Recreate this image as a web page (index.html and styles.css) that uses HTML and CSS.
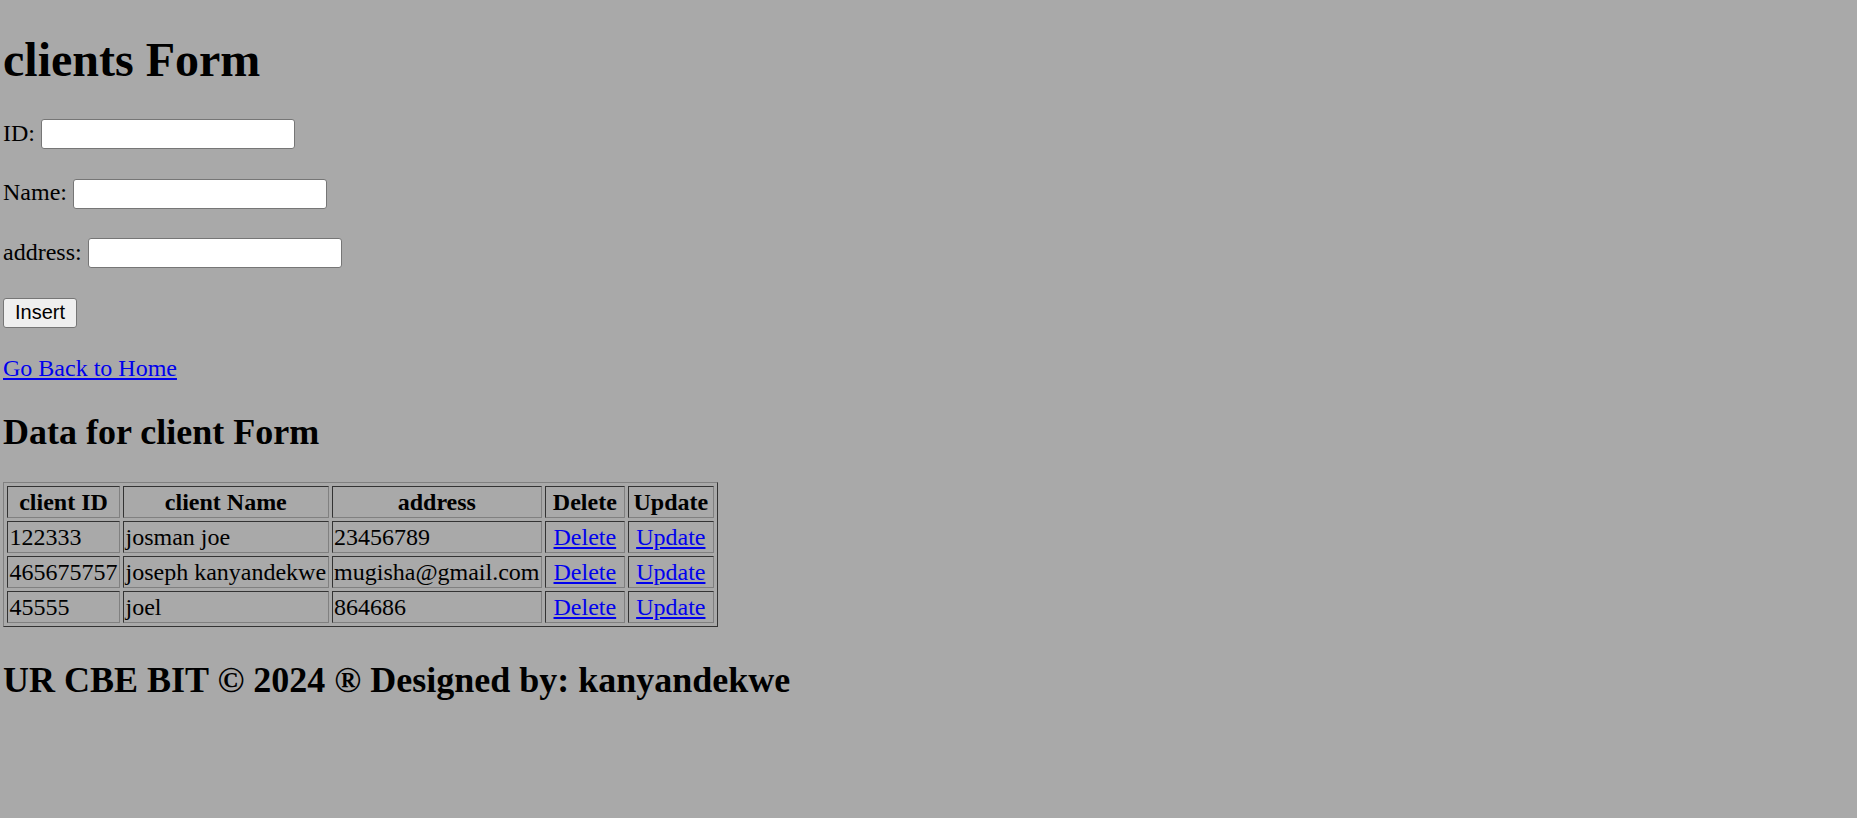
FILE: index.html
```html
<!DOCTYPE html>
<html>
<head>
<meta charset="utf-8">
<title>clients Form</title>
<link rel="stylesheet" href="styles.css">
</head>
<body>
<h1 class="title">clients Form</h1>
<form class="form">
  <p class="row"><label>ID: <input type="text" class="field"></label></p>
  <p class="row"><label>Name: <input type="text" class="field"></label></p>
  <p class="row"><label>address: <input type="text" class="field"></label></p>
  <p class="row last"><button type="button" class="btn">Insert</button></p>
</form>
<p class="back"><a href="#" class="link">Go Back to Home</a></p>
<h2 class="subtitle">Data for client Form</h2>
<table class="data">
  <tr><th>client ID</th><th>client Name</th><th>address</th><th>Delete</th><th>Update</th></tr>
  <tr><td>122333</td><td>josman joe</td><td>23456789</td><td><a href="#" class="link action">Delete</a></td><td><a href="#" class="link action">Update</a></td></tr>
  <tr><td>465675757</td><td>joseph kanyandekwe</td><td>mugisha@gmail.com</td><td><a href="#" class="link action">Delete</a></td><td><a href="#" class="link action">Update</a></td></tr>
  <tr><td>45555</td><td>joel</td><td>864686</td><td><a href="#" class="link action">Delete</a></td><td><a href="#" class="link action">Update</a></td></tr>
</table>
<h2 class="footer">UR CBE BIT © 2024 ® Designed by: kanyandekwe</h2>
</body>
</html>
```
FILE: styles.css
```css
html {
  background: #a9a9a9;
}
body {
  margin: 0;
  padding: 0 3px;
  font-family: "Liberation Serif", "Times New Roman", serif;
  font-size: 24px;
  color: #000;
}
.title {
  font-size: 48px;
  font-weight: bold;
  margin: 32px 0;
}
.row {
  margin: 29.5px 0;
}
.row.last {
  margin-bottom: 27.5px;
}
.back {
  margin: 27.5px 0;
}
.field {
  width: 254px;
  height: 30px;
  box-sizing: border-box;
  border: 1px solid #767676;
  border-radius: 3px;
  background: #fff;
  padding: 1px 3px;
  font-size: 20px;
  font-family: "Liberation Sans", Arial, sans-serif;
  vertical-align: baseline;
}
.btn {
  width: 74px;
  height: 30px;
  box-sizing: border-box;
  border: 1px solid #767676;
  border-radius: 3px;
  background: #efefef;
  font-family: "Liberation Sans", Arial, sans-serif;
  font-size: 20px;
  color: #000;
  padding: 0 9px;
}
.link {
  color: #0000ee;
  text-decoration: underline;
}
.action {
  display: inline-block;
  padding: 0 6px;
  background-clip: content-box;
}
.subtitle {
  font-size: 36px;
  font-weight: bold;
  margin: 28.5px 0 29.5px;
}
.footer {
  font-size: 36px;
  font-weight: bold;
  margin: 31.5px 0 30px;
}
.data {
  border: 1px solid;
  border-color: #808080 #333 #333 #808080;
  border-spacing: 3px;
}
.data th,
.data td {
  border: 1px solid;
  border-color: #333 #808080 #808080 #333;
  padding: 1.5px;
}
.data td {
  text-align: left;
}
```
